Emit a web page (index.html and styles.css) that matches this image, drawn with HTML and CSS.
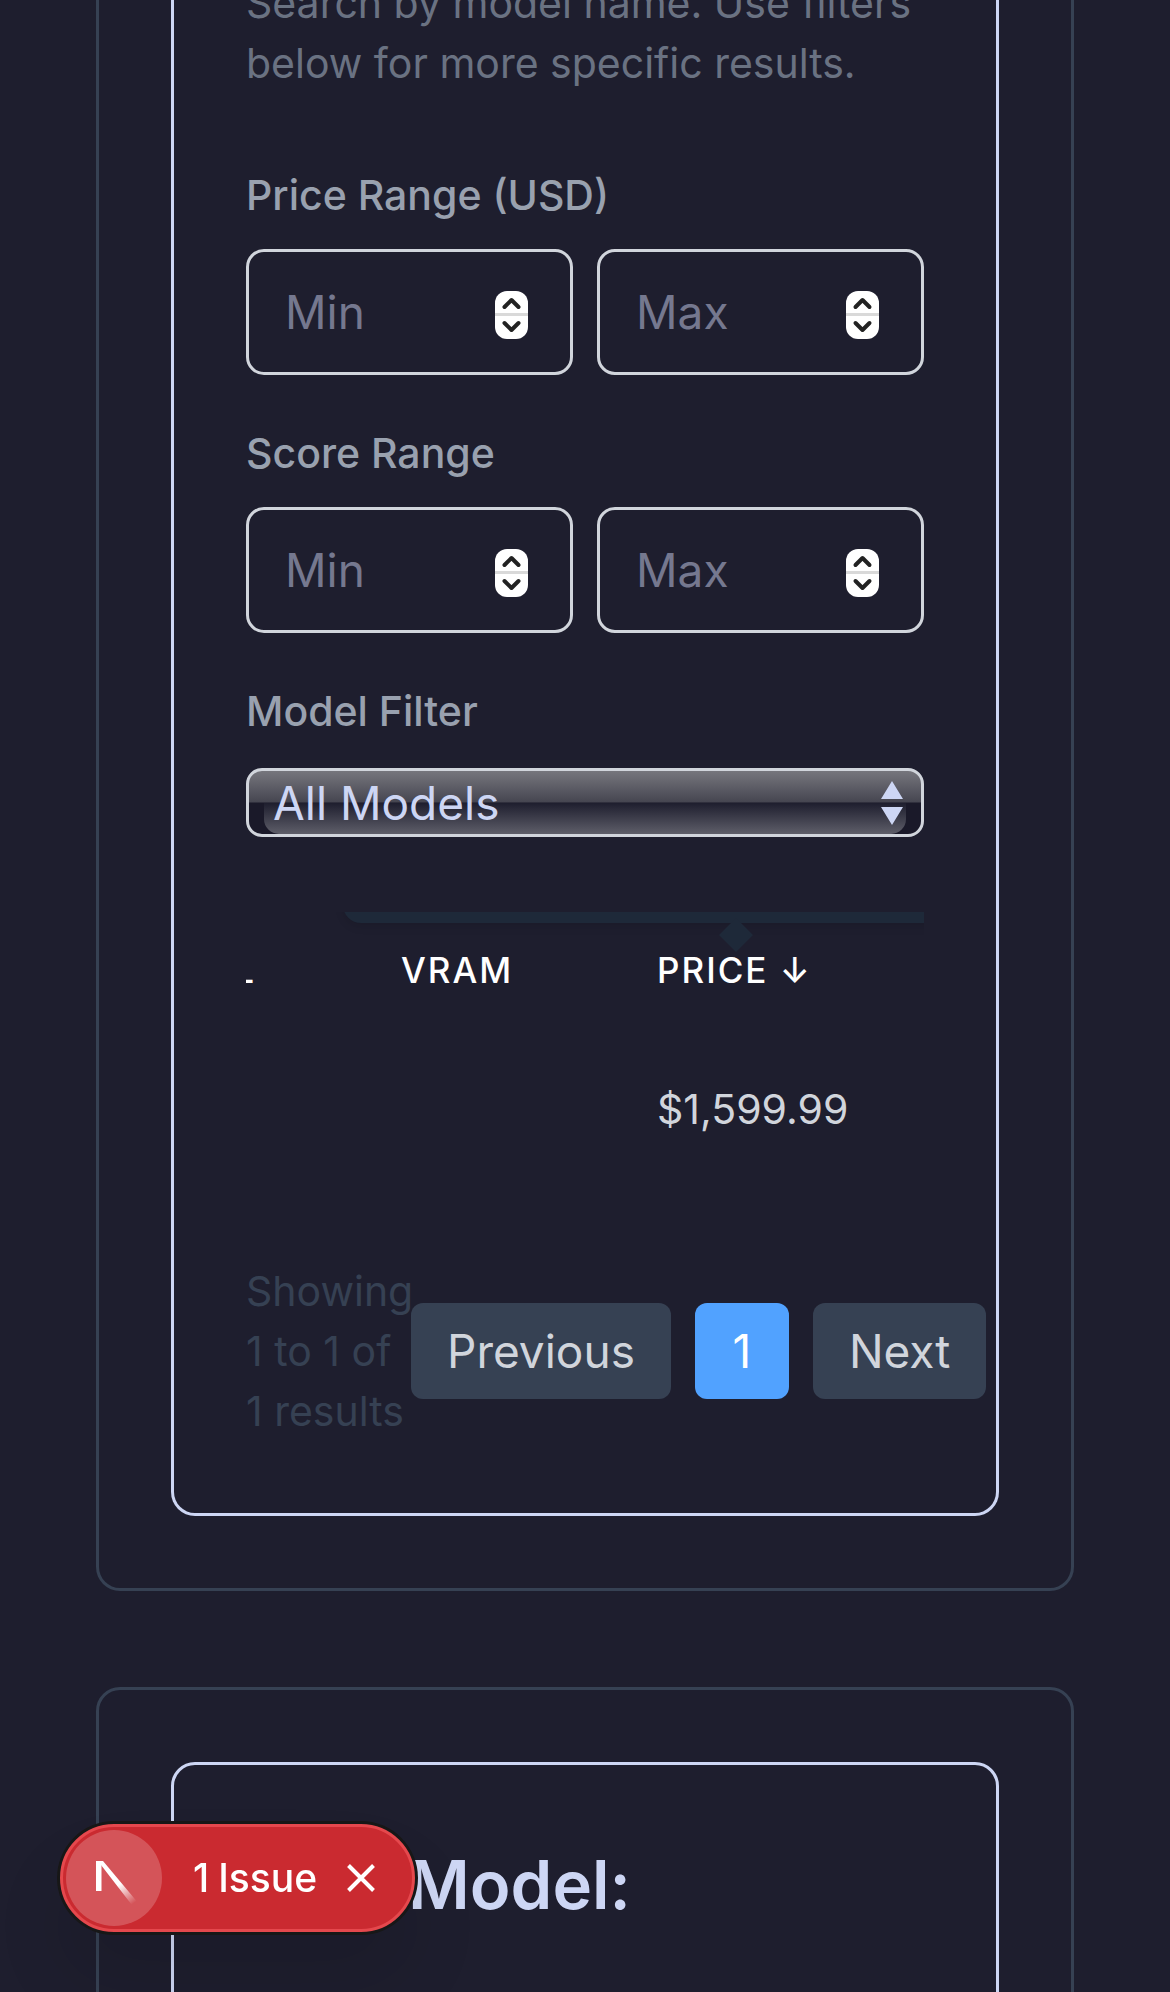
FILE: index.html
```html
<!DOCTYPE html>
<html lang="en">
<head>
<meta charset="utf-8">
<meta name="viewport" content="width=device-width, initial-scale=1">
<title>GPU Prices</title>
<link rel="stylesheet" href="styles.css">
</head>
<body>
<main class="page">
  <section class="card card-results">
    <div class="panel">
      <p class="help">Search by model name. Use filters below for more specific results.</p>
      <div class="filters">
        <fieldset class="range">
          <legend class="label">Price Range (USD)</legend>
          <div class="range-inputs">
            <div class="number">
              <input type="number" placeholder="Min" aria-label="Minimum price">
              <svg class="spinner" viewBox="0 0 33 48" aria-hidden="true"><rect class="spinner-body" width="33" height="48" rx="12"/><rect class="spinner-line" y="22" width="33" height="3"/><path d="M9.500 16 16.500 9l7 7M9.500 32l7 7 7-7"/></svg>
            </div>
            <div class="number">
              <input type="number" placeholder="Max" aria-label="Maximum price">
              <svg class="spinner" viewBox="0 0 33 48" aria-hidden="true"><rect class="spinner-body" width="33" height="48" rx="12"/><rect class="spinner-line" y="22" width="33" height="3"/><path d="M9.500 16 16.500 9l7 7M9.500 32l7 7 7-7"/></svg>
            </div>
          </div>
        </fieldset>
        <fieldset class="range">
          <legend class="label">Score Range</legend>
          <div class="range-inputs">
            <div class="number">
              <input type="number" placeholder="Min" aria-label="Minimum score">
              <svg class="spinner" viewBox="0 0 33 48" aria-hidden="true"><rect class="spinner-body" width="33" height="48" rx="12"/><rect class="spinner-line" y="22" width="33" height="3"/><path d="M9.500 16 16.500 9l7 7M9.500 32l7 7 7-7"/></svg>
            </div>
            <div class="number">
              <input type="number" placeholder="Max" aria-label="Maximum score">
              <svg class="spinner" viewBox="0 0 33 48" aria-hidden="true"><rect class="spinner-body" width="33" height="48" rx="12"/><rect class="spinner-line" y="22" width="33" height="3"/><path d="M9.500 16 16.500 9l7 7M9.500 32l7 7 7-7"/></svg>
            </div>
          </div>
        </fieldset>
        <div>
          <label class="label" for="model">Model Filter</label>
          <div class="select">
            <select id="model"><option>All Models</option></select>
            <svg class="select-arrows" viewBox="0 0 22 44" aria-hidden="true"><path d="M0 18 11 0l11 18zM0 26h22L11 44z"/></svg>
          </div>
        </div>
      </div>
      <div class="table-scroll">
        <div class="tooltip"></div>
        <table>
          <colgroup><col class="col-model"><col class="col-vram"><col class="col-price"></colgroup>
          <thead><tr><th>Model</th><th>VRAM</th><th>Price ↓</th></tr></thead>
          <tbody><tr><td></td><td></td><td>$1,599.99</td></tr></tbody>
        </table>
      </div>
      <div class="pagination">
        <p class="count">Showing 1 to 1 of 1 results</p>
        <div class="pages">
          <button type="button">Previous</button>
          <button type="button" class="current" aria-current="page">1</button>
          <button type="button">Next</button>
        </div>
      </div>
    </div>
  </section>
  <section class="card">
    <div class="panel panel-model">
      <h2>Model:</h2>
    </div>
  </section>
</main>
<div class="issues">
  <button type="button" class="logo" aria-label="Open developer tools">
    <svg viewBox="0 0 96 96" aria-hidden="true">
      <defs><linearGradient id="fade" gradientUnits="userSpaceOnUse" x1="54" y1="54" x2="68" y2="73"><stop offset="0" stop-color="#fff"/><stop offset="1" stop-color="#fff" stop-opacity="0"/></linearGradient></defs>
      <path fill="#fff" d="M30 31h5.500v30H30z"/>
      <path fill="url(#fade)" d="M30 31h7l33.500 40-5 3.500L35 35z"/>
    </svg>
  </button>
  <button type="button" class="issue-text"><span>1</span><span>Issue</span></button>
  <button type="button" class="close" aria-label="Dismiss"><svg viewBox="0 0 28 28" aria-hidden="true"><path d="M1.500 1.500l25 25M26.500 1.500l-25 25"/></svg></button>
</div>
</body>
</html>
```
FILE: styles.css
```css
* { box-sizing: border-box; margin: 0; }
html, body { height: 100%; }
body {
  overflow: hidden;
  background: #1e1e2e;
  color: #cdd6f4;
  font: 41px/60px Inter, "Liberation Sans", sans-serif;
}
button, input, select { font: inherit; color: inherit; border: 0; padding: 0; background: none; }

.page { display: flex; flex-direction: column; gap: 96px; padding: 0 96px; }
.card { border: 3px solid #364153; border-radius: 24px; padding: 72px; }
.panel { border: 3px solid #cdd6f4; border-radius: 24px; padding: 72px; }
.card-results, .card-results .panel { border-top: 0; border-top-left-radius: 0; border-top-right-radius: 0; padding-top: 0; }

.help { margin-top: -27px; color: #6a7282; }
.filters { display: flex; flex-direction: column; gap: 48px; padding-top: 72px; }
.label { display: block; padding: 0; margin-bottom: 24px; color: #99a1af; font-weight: 500; }
.range { border: 0; padding: 0; min-width: 0; }
.range-inputs { display: grid; grid-template-columns: 1fr 1fr; gap: 24px; }

.number { display: grid; align-items: center; }
.number input {
  grid-area: 1 / 1;
  width: 100%;
  height: 126px;
  padding: 0 90px 0 36px;
  border: 3px solid #d1d5dc;
  border-radius: 18px;
  font-size: 46px;
  appearance: textfield;
}
.number input::placeholder { color: #75788f; opacity: 1; }
.spinner { grid-area: 1 / 1; justify-self: end; width: 33px; height: 48px; margin: 6px 45px 0 0; pointer-events: none; }
.spinner-body { fill: #fff; }
.spinner-line { fill: #d9d9d9; }
.spinner path { fill: none; stroke: #222; stroke-width: 4; stroke-linecap: round; stroke-linejoin: round; }

.select {
  position: relative;
  display: grid;
  align-items: center;
  overflow: hidden;
  margin-top: 27px;
  border: 3px solid #d1d5dc;
  border-radius: 16px;
  background: linear-gradient(#76767d, #454550) 0 0 / 100% 50% no-repeat #1a1929;
}
.select::before {
  content: "";
  position: absolute;
  inset: 50% 15px 0;
  border-radius: 0 0 15px 15px;
  background: linear-gradient(#1e1e2e, #5e5e69);
}
.select select { grid-area: 1 / 1; position: relative; width: 100%; height: 63px; padding-left: 24px; appearance: none; font-size: 46px; line-height: 60px; }
.select-arrows { grid-area: 1 / 1; position: relative; justify-self: end; width: 22px; height: 44px; margin-right: 18px; fill: #cdd6f4; pointer-events: none; }

.table-scroll { position: relative; overflow: hidden; margin-top: 75px; }
.tooltip { position: absolute; top: -49px; left: 97px; right: -72px; height: 60px; border-radius: 18px; background: #1e2939; box-shadow: 0 4px 8px rgba(0, 0, 0, .1); }
.tooltip::after { content: ""; position: absolute; left: 381px; bottom: -24px; width: 24px; height: 24px; background: #1e2939; transform: rotate(45deg); }
table { position: relative; table-layout: fixed; width: 875px; margin-left: -197px; border-collapse: collapse; }
.col-model { width: 280px; }
.col-vram { width: 256px; }
th { padding: 34px 72px 36px; color: #fff; font-size: 35px; line-height: 48px; font-weight: 500; text-align: left; text-transform: uppercase; letter-spacing: 2px; white-space: nowrap; }
td { height: 157px; padding: 48px 72px; color: #d1d5dc; white-space: nowrap; }

.pagination { display: flex; align-items: center; padding-top: 74px; }
.count { flex: 0 0 165px; min-width: 0; color: #364153; }
.pages { display: flex; gap: 24px; }
.pages button { min-width: 94px; height: 96px; padding: 0 36px; border-radius: 12px; background: #364153; color: #d1d5dc; font-size: 46px; }
.pages .current { background: #51a2ff; color: #fff; }

.panel-model { min-height: 480px; }
h2 { padding-left: 162px; font-size: 67px; line-height: 96px; font-weight: 600; }

.issues {
  position: fixed;
  left: 60px;
  bottom: 60px;
  display: flex;
  align-items: center;
  height: 108px;
  padding: 0 37px 0 3px;
  border: 3px solid #e5484d;
  border-radius: 54px;
  background: #ca2a30;
  color: #fff;
  box-shadow: 0 0 0 3px #171717, 0 48px 72px rgba(0, 0, 0, .1);
}
.logo { width: 96px; height: 96px; border-radius: 50%; background: rgba(255, 255, 255, .2); }
.logo svg { display: block; width: 96px; height: 96px; }
.issue-text { display: flex; gap: 9px; margin: 0 30px 0 31px; font-size: 39px; font-weight: 500; }
.close svg { display: block; width: 28px; height: 28px; fill: none; stroke: #fff; stroke-width: 4; }
```
